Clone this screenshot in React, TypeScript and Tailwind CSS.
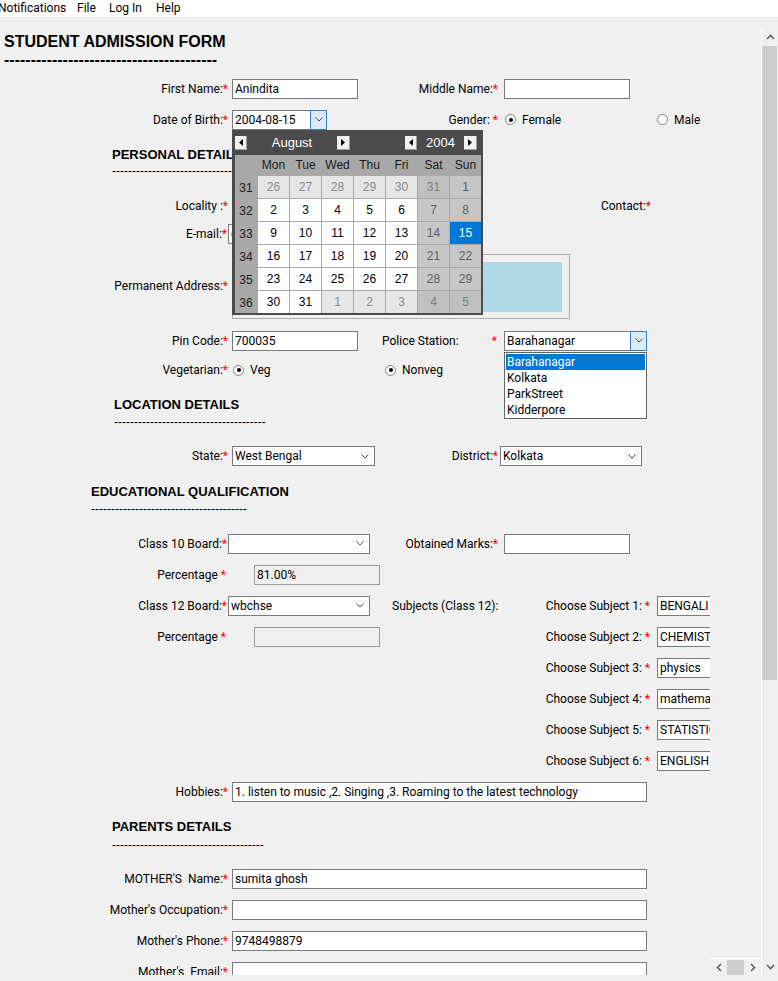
import React from "react";

const Star = () => <span className="text-[#ff0000]">*</span>;

function Chevron() {
  return (
    <svg width="8" height="5" viewBox="0 0 8 5" className="block">
      <path d="M0.5 0.5L4 4L7.5 0.5" fill="none" stroke="#4d4d4d" strokeWidth="1" />
    </svg>
  );
}

function Field({ cls, value = "", disabled = false }: { cls: string; value?: string; disabled?: boolean }) {
  return (
    <div
      className={`h-[20px] shrink-0 border ${
        disabled ? "border-[#9a9a9a] bg-[#f0f0f0]" : "border-[#7a7a7a] bg-white"
      } pl-[2px] leading-[18px] whitespace-nowrap overflow-hidden ${cls}`}
    >
      {value}
    </div>
  );
}

function Combo({ cls, value = "" }: { cls: string; value?: string }) {
  return (
    <div className={`h-[20px] shrink-0 border border-[#7a7a7a] bg-white flex items-center ${cls}`}>
      <div className="flex-1 pl-[2px] whitespace-nowrap overflow-hidden leading-[18px]">{value}</div>
      <div className="w-[17px] flex justify-center mr-[1px]">
        <Chevron />
      </div>
    </div>
  );
}

function ActiveCombo({ cls, textCls, value, children }: { cls: string; textCls: string; value: string; children?: React.ReactNode }) {
  return (
    <div className={`relative h-[20px] shrink-0 flex ${cls}`}>
      <div className={`h-[20px] border-y border-l border-[#7a7a7a] bg-white pl-[2px] leading-[18px] whitespace-nowrap overflow-hidden ${textCls}`}>
        {value}
      </div>
      <div className="w-[17px] h-[20px] border border-[#3c7fc1] bg-[#dcebfa] flex items-center justify-center">
        <Chevron />
      </div>
      {children}
    </div>
  );
}

function Radio({ checked }: { checked: boolean }) {
  return (
    <span className="w-[11px] h-[11px] rounded-full border border-[#7f7f7f] bg-white flex items-center justify-center shrink-0">
      {checked && <span className="w-[4px] h-[4px] rounded-full bg-black" />}
    </span>
  );
}

function Label({ cls, children }: { cls: string; children: React.ReactNode }) {
  return <div className={`shrink-0 text-right whitespace-pre ${cls}`}>{children}</div>;
}

function ArrowBtn({ dir, cls }: { dir: "l" | "r"; cls: string }) {
  return (
    <div className={`h-[14px] bg-[#f0f0f0] border-r border-b border-[#a0a0a0] flex items-center justify-center shrink-0 ${cls}`}>
      <svg width="4" height="7" viewBox="0 0 4 7" className="block">
        {dir === "l" ? <path d="M4 0L0 3.5L4 7Z" fill="#000" /> : <path d="M0 0L4 3.5L0 7Z" fill="#000" />}
      </svg>
    </div>
  );
}

const weeks = [31, 32, 33, 34, 35, 36];
const days: { d: number; other: boolean }[][] = [
  [26, 27, 28, 29, 30, 31, 1].map((d, i) => ({ d, other: i < 6 })),
  [2, 3, 4, 5, 6, 7, 8].map((d) => ({ d, other: false })),
  [9, 10, 11, 12, 13, 14, 15].map((d) => ({ d, other: false })),
  [16, 17, 18, 19, 20, 21, 22].map((d) => ({ d, other: false })),
  [23, 24, 25, 26, 27, 28, 29].map((d) => ({ d, other: false })),
  [30, 31, 1, 2, 3, 4, 5].map((d, i) => ({ d, other: i >= 2 })),
];

function cellCls(col: number, other: boolean, selected: boolean) {
  if (selected) return "bg-[#0078d7] text-white";
  const weekend = col >= 5;
  if (weekend) return other ? "bg-[#c0c0c0] text-[#7e7e7e]" : "bg-[#c6c6c6] text-[#5e5e5e]";
  return other ? "bg-[#e6e6e6] text-[#8a8a8a]" : "bg-white text-black";
}

function Calendar() {
  return (
    <div className="absolute left-[232px] top-[113px] w-[251px] bg-[#4b4b4b] pl-[3px] pr-[2px] pb-[2px] font-['Liberation_Sans',Arial,sans-serif]">
      <div className="h-[25px] flex items-center text-white text-[13px]">
        <ArrowBtn dir="l" cls="w-[12px]" />
        <div className="w-[90px] text-center leading-[25px]">August</div>
        <ArrowBtn dir="r" cls="w-[13px]" />
        <div className="w-[55px]" />
        <ArrowBtn dir="l" cls="w-[12px]" />
        <div className="w-[47px] text-center leading-[25px]">2004</div>
        <ArrowBtn dir="r" cls="w-[13px]" />
      </div>
      <div className="grid grid-cols-[22px_repeat(7,31px)] grid-rows-[20px_repeat(6,22px)] gap-px bg-[#a8a8a8] text-[12px]">
        <div />
        {["Mon", "Tue", "Wed", "Thu", "Fri", "Sat", "Sun"].map((n) => (
          <div key={n} className="flex items-center justify-center text-[#1a1a1a]">
            {n}
          </div>
        ))}
        {days.map((row, r) => (
          <React.Fragment key={r}>
            <div className="flex items-center justify-center text-[#1a1a1a] pt-[1px]">{weeks[r]}</div>
            {row.map((c, i) => (
              <div
                key={i}
                className={`flex items-center justify-center ${cellCls(i, c.other, r === 2 && i === 6)}`}
              >
                {c.d}
              </div>
            ))}
          </React.Fragment>
        ))}
      </div>
    </div>
  );
}

function SectionHeader({ cls, textCls, dashCls, text, dashes }: { cls: string; textCls: string; dashCls: string; text: string; dashes: number }) {
  return (
    <div className={`shrink-0 flex flex-col font-['Liberation_Sans',Arial,sans-serif] ${cls}`}>
      <div className={`h-[16px] leading-[16px] font-bold text-[13px] whitespace-nowrap ${textCls}`}>{text}</div>
      <div className={`h-[12px] leading-[12px] text-[12px] whitespace-nowrap ${dashCls}`}>{"-".repeat(dashes)}</div>
    </div>
  );
}

const subjects = ["BENGALI", "CHEMISTRY", "physics", "mathematics", "STATISTICS", "ENGLISH"];

function SubjectPart({ n }: { n: number }) {
  return (
    <>
      <Label cls="w-[130px]">
        Choose Subject {n + 1}: <Star />
      </Label>
      <Field cls="ml-[7px] w-[126px]" value={subjects[n]} />
    </>
  );
}

export default function App() {
  return (
    <div className="w-[778px] h-[981px] bg-[#f0f0f0] overflow-hidden flex flex-col text-[12px] text-black font-[Roboto,'Liberation_Sans',sans-serif]">
      {/* Menu bar */}
      <div className="h-[17px] bg-white flex items-center shrink-0 leading-[17px] whitespace-nowrap">
        <span className="w-[79px] ml-[-2px] shrink-0">Notifications</span>
        <span className="w-[32px] shrink-0">File</span>
        <span className="w-[47px] shrink-0">Log In</span>
        <span className="shrink-0">Help</span>
      </div>

      <div className="flex h-[958px] shrink-0">
        {/* Form content */}
        <div className="relative w-[710px] h-full overflow-hidden flex flex-col">
          {/* Title */}
          <div className="h-[56px] shrink-0 pl-[4px] flex flex-col font-['Liberation_Sans',Arial,sans-serif] font-bold text-[16px]">
            <div className="mt-[15px] h-[20px] leading-[20px] whitespace-nowrap">STUDENT ADMISSION FORM</div>
            <div className="h-[16px] leading-[16px] whitespace-nowrap">{"-".repeat(40)}</div>
          </div>

          {/* First name */}
          <div className="h-[31px] shrink-0 flex items-center">
            <Label cls="w-[228px]">
              First Name:<Star />
            </Label>
            <Field cls="ml-[4px] w-[126px]" value="Anindita" />
            <Label cls="w-[140px]">
              Middle Name:<Star />
            </Label>
            <Field cls="ml-[6px] w-[126px]" />
          </div>

          {/* DOB / Gender */}
          <div className="h-[31px] shrink-0 flex items-center">
            <Label cls="w-[228px]">
              Date of Birth:<Star />
            </Label>
            <ActiveCombo cls="ml-[4px]" textCls="w-[78px]" value="2004-08-15" />
            <Label cls="w-[171px]">
              Gender: <Star />
            </Label>
            <div className="ml-[7px] w-[152px] shrink-0 flex items-center">
              <Radio checked />
              <span className="ml-[6px]">Female</span>
            </div>
            <div className="shrink-0 flex items-center">
              <Radio checked={false} />
              <span className="ml-[6px]">Male</span>
            </div>
          </div>

          <SectionHeader cls="h-[55px] pl-[112px]" textCls="mt-[12px]" dashCls="mt-[2px]" text="PERSONAL DETAILS" dashes={38} />

          {/* Locality / Contact */}
          <div className="h-[31px] shrink-0 flex items-center">
            <Label cls="w-[228px]">
              Locality :<Star />
            </Label>
            <Field cls="ml-[4px] w-[126px]" />
            <Label cls="w-[293px]">
              Contact:<Star />
            </Label>
          </div>

          {/* Email */}
          <div className="h-[26px] shrink-0 flex items-center">
            <Label cls="w-[227px]">
              E-mail:<Star />
            </Label>
            <Field cls="ml-[1px] w-[180px]" value="ghosh.anindita@gmail.com" />
          </div>

          {/* Permanent Address */}
          <div className="h-[77px] shrink-0 flex items-center">
            <Label cls="w-[228px]">
              Permanent Address:<Star />
            </Label>
            <div className="ml-[4px] mt-[2px] w-[338px] h-[65px] shrink-0 border border-[#adadad] bg-[#f0f0f0] pt-[7px] pl-[7px] pr-[7px] pb-[6px]">
              <div className="w-full h-full bg-[#add8e6]" />
            </div>
          </div>

          {/* Pin code / Police station */}
          <div className="h-[33px] shrink-0 flex items-center">
            <Label cls="w-[228px]">
              Pin Code:<Star />
            </Label>
            <Field cls="ml-[4px] w-[126px]" value="700035" />
            <div className="w-[140px] shrink-0 pl-[24px] pr-[1px] flex justify-between">
              <span>Police Station:</span>
              <Star />
            </div>
            <ActiveCombo cls="ml-[6px] z-10" textCls="w-[126px]" value="Barahanagar">
              <div className="absolute left-0 top-[21px] w-[143px] h-[67px] border border-[#646464] bg-white p-[1px]">
                <div className="h-[16px] leading-[16px] pl-[1px] bg-[#0078d7] text-white">Barahanagar</div>
                <div className="h-[16px] leading-[16px] pl-[1px]">Kolkata</div>
                <div className="h-[16px] leading-[16px] pl-[1px]">ParkStreet</div>
                <div className="h-[16px] leading-[16px] pl-[1px]">Kidderpore</div>
              </div>
            </ActiveCombo>
          </div>

          {/* Vegetarian */}
          <div className="h-[26px] shrink-0 flex items-center">
            <Label cls="w-[228px]">
              Vegetarian:<Star />
            </Label>
            <div className="ml-[5px] w-[152px] shrink-0 flex items-center">
              <Radio checked />
              <span className="ml-[6px]">Veg</span>
            </div>
            <div className="shrink-0 flex items-center">
              <Radio checked />
              <span className="ml-[6px]">Nonveg</span>
            </div>
          </div>

          <SectionHeader cls="h-[57px] pl-[114px]" textCls="mt-[14px]" dashCls="mt-[3px]" text="LOCATION DETAILS" dashes={38} />

          {/* State / District */}
          <div className="h-[32px] shrink-0 flex items-center">
            <Label cls="w-[228px]">
              State:<Star />
            </Label>
            <Combo cls="ml-[4px] w-[143px]" value="West Bengal" />
            <Label cls="w-[123px]">
              District:<Star />
            </Label>
            <Combo cls="ml-[2px] w-[142px]" value="Kolkata" />
          </div>

          <SectionHeader cls="h-[56px] pl-[91px]" textCls="mt-[12px]" dashCls="mt-[3px]" text="EDUCATIONAL QUALIFICATION" dashes={39} />

          {/* Class 10 */}
          <div className="h-[31px] shrink-0 flex items-center">
            <Label cls="w-[227px]">
              Class 10 Board:<Star />
            </Label>
            <Combo cls="ml-[1px] w-[142px]" />
            <Label cls="w-[128px]">
              Obtained Marks:<Star />
            </Label>
            <Field cls="ml-[6px] w-[126px]" />
          </div>

          {/* Percentage */}
          <div className="h-[31px] shrink-0 flex items-center">
            <Label cls="w-[226px]">
              Percentage <Star />
            </Label>
            <Field cls="ml-[28px] w-[126px]" value="81.00%" disabled />
          </div>

          {/* Class 12 + Subject 1 */}
          <div className="h-[31px] shrink-0 flex items-center">
            <div className="w-[520px] shrink-0 flex items-center">
              <Label cls="w-[227px]">
                Class 12 Board:<Star />
              </Label>
              <Combo cls="ml-[1px] w-[142px]" value="wbchse" />
              <span className="ml-[22px] whitespace-nowrap">Subjects (Class 12):</span>
            </div>
            <SubjectPart n={0} />
          </div>

          {/* Percentage 2 + Subject 2 */}
          <div className="h-[31px] shrink-0 flex items-center">
            <div className="w-[520px] shrink-0 flex items-center">
              <Label cls="w-[226px]">
                Percentage <Star />
              </Label>
              <Field cls="ml-[28px] w-[126px]" disabled />
            </div>
            <SubjectPart n={1} />
          </div>

          {[2, 3, 4, 5].map((n) => (
            <div key={n} className="h-[31px] shrink-0 flex items-center">
              <div className="w-[520px] shrink-0" />
              <SubjectPart n={n} />
            </div>
          ))}

          {/* Hobbies */}
          <div className="h-[31px] shrink-0 flex items-center">
            <Label cls="w-[228px]">
              Hobbies:<Star />
            </Label>
            <Field cls="ml-[4px] w-[415px]" value="1. listen to music ,2. Singing ,3. Roaming to the latest technology" />
          </div>

          <SectionHeader cls="h-[56px] pl-[112px]" textCls="mt-[12px]" dashCls="mt-[4px]" text="PARENTS DETAILS" dashes={38} />

          <div className="h-[31px] shrink-0 flex items-center">
            <Label cls="w-[228px]">
              MOTHER'S  Name:<Star />
            </Label>
            <Field cls="ml-[4px] w-[415px]" value="sumita ghosh" />
          </div>
          <div className="h-[31px] shrink-0 flex items-center">
            <Label cls="w-[228px]">
              Mother's Occupation:<Star />
            </Label>
            <Field cls="ml-[4px] w-[415px]" />
          </div>
          <div className="h-[31px] shrink-0 flex items-center">
            <Label cls="w-[228px]">
              Mother's Phone:<Star />
            </Label>
            <Field cls="ml-[4px] w-[415px]" value="9748498879" />
          </div>
          <div className="h-[31px] shrink-0 flex items-center">
            <Label cls="w-[228px]">
              Mother's  Email:<Star />
            </Label>
            <Field cls="ml-[4px] w-[415px]" />
          </div>

          <Calendar />
        </div>

        {/* gap + horizontal scrollbar fragment */}
        <div className="w-[51px] h-full shrink-0 flex flex-col justify-end">
          <div className="h-[17px] border-t border-white flex items-center">
            <div className="w-[17px] flex justify-center">
              <svg width="6" height="9" viewBox="0 0 6 9" className="block">
                <path d="M5 1L1.5 4.5L5 8" fill="none" stroke="#606060" strokeWidth="1.6" />
              </svg>
            </div>
            <div className="w-[17px] h-[15px] bg-[#cdcdcd]" />
            <div className="w-[17px] flex justify-center">
              <svg width="6" height="9" viewBox="0 0 6 9" className="block">
                <path d="M1 1L4.5 4.5L1 8" fill="none" stroke="#606060" strokeWidth="1.6" />
              </svg>
            </div>
          </div>
        </div>

        {/* vertical scrollbar */}
        <div className="w-[17px] h-full shrink-0 pt-[11px]">
          <div className="h-full border-l border-white flex flex-col">
            <div className="h-[18px] shrink-0 flex items-center justify-center">
              <svg width="9" height="6" viewBox="0 0 9 6" className="block">
                <path d="M1 5L4.5 1.5L8 5" fill="none" stroke="#606060" strokeWidth="1.6" />
              </svg>
            </div>
            <div className="h-[634px] shrink-0 bg-[#cdcdcd] mr-[1px]" />
            <div className="flex-1" />
            <div className="h-[17px] shrink-0 flex items-center justify-center">
              <svg width="9" height="6" viewBox="0 0 9 6" className="block">
                <path d="M1 1L4.5 4.5L8 1" fill="none" stroke="#606060" strokeWidth="1.6" />
              </svg>
            </div>
          </div>
        </div>
      </div>
    </div>
  );
}
